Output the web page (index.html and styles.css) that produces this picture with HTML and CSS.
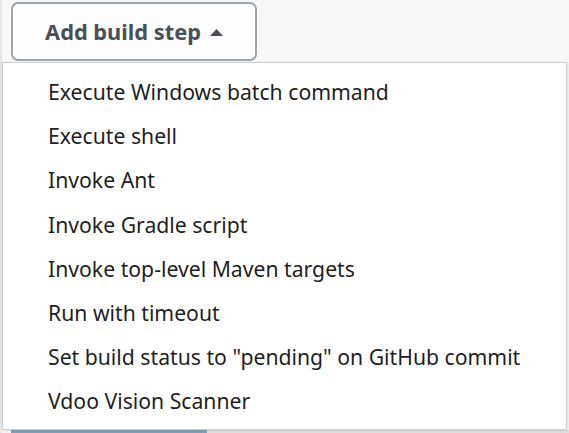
FILE: index.html
```html
<!DOCTYPE html>
<html>
<head>
<meta charset="utf-8">
<link rel="stylesheet" href="styles.css">
</head>
<body>
<div class="page">
  <div class="side"></div>
  <div class="main">
    <button class="btn">Add build step <svg class="caret" width="13" height="7" viewBox="0 0 13 7"><path d="M0 7 L6.5 0 L13 7 Z" fill="#4b5058"/></svg></button>
    <div class="under">
      <div class="bar"></div>
      <div class="bar2"></div>
    </div>
  </div>
  <ul class="menu">
    <li>Execute Windows batch command</li>
    <li>Execute shell</li>
    <li>Invoke Ant</li>
    <li>Invoke Gradle script</li>
    <li>Invoke top-level Maven targets</li>
    <li>Run with timeout</li>
    <li>Set build status to "pending" on GitHub commit</li>
    <li>Vdoo Vision Scanner</li>
  </ul>
</div>
</body>
</html>
```

FILE: styles.css
```css
html, body {
  margin: 0;
  padding: 0;
  background: #f8f8f8;
  font-family: "Noto Sans", "Open Sans", sans-serif;
  overflow: hidden;
}
.page {
  position: relative;
  width: 569px;
  height: 433px;
  display: flex;
}
.side {
  width: 2px;
  background: #e6e6e6;
}
.main {
  flex: 1;
  padding: 2px 0 0 9px;
  display: flex;
  flex-direction: column;
}
.btn {
  box-sizing: border-box;
  width: 246px;
  height: 59px;
  border: 2px solid #9ba6ae;
  border-radius: 7px;
  background: #fdfdfd;
  color: #4b5058;
  font-family: inherit;
  font-weight: 700;
  font-size: 21.8px;
  display: flex;
  align-items: center;
  justify-content: center;
  gap: 9px;
  padding: 0 0 0 0;
}
.caret {
  margin-top: 1px;
}
.under {
  margin-top: auto;
  height: 3px;
  display: flex;
}
.bar {
  width: 196px;
  background: #86a2b6;
}
.bar2 {
  flex: 1;
  background: #e2e2e2;
}
.menu {
  position: absolute;
  left: 2px;
  top: 62px;
  width: 565px;
  height: 368px;
  box-sizing: border-box;
  margin: 0;
  padding: 7px 0 0 0;
  list-style: none;
  background: #fff;
  border: 1px solid #cfcfcf;
  box-shadow: 1px 1px 3px rgba(0,0,0,0.12);
}
.menu li {
  height: 44.2px;
  line-height: 44px;
  padding-left: 45px;
  font-size: 21.2px;
  color: #1f1f1f;
  white-space: nowrap;
}
```
